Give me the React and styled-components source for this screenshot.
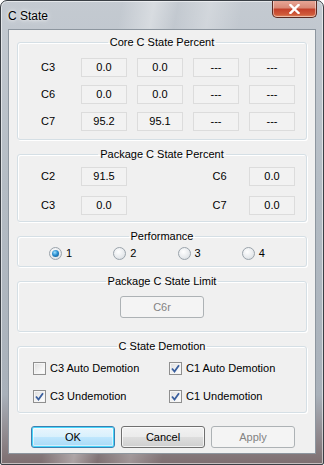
import styled, { createGlobalStyle, css } from 'styled-components';

const GlobalStyle = createGlobalStyle`
  html, body {
    margin: 0;
    padding: 0;
    background: #ffffff;
  }
  body {
    font-family: 'Liberation Sans', Arial, sans-serif;
    font-size: 11px;
    color: #000;
  }
`;

const Window = styled.div`
  width: 324px;
  height: 465px;
  box-sizing: border-box;
  border: 1px solid #3a3f45;
  border-radius: 7px 7px 2px 2px;
  display: flex;
  flex-direction: column;
  background:
    linear-gradient(100deg, rgba(255,255,255,0) 30%, rgba(255,255,255,0.35) 38%, rgba(255,255,255,0) 44%, rgba(255,255,255,0.25) 52%, rgba(255,255,255,0) 60%),
    linear-gradient(180deg, #c4cad1 0%, #b4bcc4 40%, #a9b1ba 85%, #7e6e70 100%);
  box-shadow: inset 0 0 0 1px rgba(255,255,255,0.55);
  overflow: hidden;
`;

const TitleBar = styled.div`
  height: 28px;
  display: flex;
  align-items: flex-start;
  justify-content: space-between;
  padding: 0 6px 0 7px;
`;

const Title = styled.div`
  font-size: 12px;
  line-height: 13px;
  margin-top: 9px;
  color: #000;
  text-shadow: 0 0 6px rgba(255,255,255,0.9), 0 0 3px rgba(255,255,255,0.9);
`;

const CloseButton = styled.div`
  width: 45px;
  height: 18px;
  margin-top: -1px;
  box-sizing: border-box;
  border: 1px solid #5a2a22;
  border-top: 0;
  border-radius: 0 0 5px 5px;
  background: linear-gradient(180deg, #e9a99a 0%, #d98a77 45%, #c4412b 55%, #cf5a3a 85%, #e08b63 100%);
  box-shadow: inset 0 0 0 1px rgba(255,255,255,0.45);
  display: flex;
  align-items: center;
  justify-content: center;
`;

const Client = styled.div`
  flex: 1;
  margin: 0 7px 10px 7px;
  box-sizing: border-box;
  border: 1px solid #8d969f;
  background: #f0f0f0;
  padding: 5px 8px 0 8px;
  display: flex;
  flex-direction: column;
  gap: 7px;
`;

const Group = styled.fieldset`
  margin: 0;
  border: 1px solid #d5dfe5;
  border-radius: 3px;
  box-shadow: inset 1px 1px 0 #ffffff, 1px 1px 0 #ffffff;
  padding: ${(p) => p.$pad || '6px 0 6px 0'};
  min-width: 0;
`;

const Legend = styled.legend`
  margin: 0 auto;
  padding: 0 2px;
  font-size: 11px;
  line-height: 14px;
  color: #000;
`;

const ValueGrid = styled.div`
  display: grid;
  grid-template-columns: 53px repeat(4, 46px);
  column-gap: 10px;
  row-gap: ${(p) => p.$rowGap || 8}px;
  align-items: center;
`;

const Label = styled.div`
  text-align: center;
  padding-left: 7px;
  line-height: 19px;
  grid-column: ${(p) => p.$col || 'auto'};
`;

const ValueBox = styled.div`
  height: 19px;
  box-sizing: border-box;
  border: 1px solid #dcdcdc;
  background: #f2f2f2;
  text-align: center;
  line-height: 17px;
  grid-column: ${(p) => p.$col || 'auto'};
`;

const RadioRow = styled.div`
  display: flex;
  padding-left: 31px;
  height: 14px;
  align-items: center;
`;

const RadioItem = styled.label`
  width: 66px;
  display: flex;
  align-items: center;
  gap: 4px;
`;

const RadioDot = styled.span`
  width: 11px;
  height: 11px;
  border-radius: 50%;
  border: 1px solid #9aa3ab;
  background: radial-gradient(circle at 40% 35%, #ffffff 0%, #e6e9ec 60%, #cfd5da 100%);
  position: relative;
  ${(p) =>
    p.$on &&
    css`
      &::after {
        content: '';
        position: absolute;
        left: 2px;
        top: 2px;
        width: 7px;
        height: 7px;
        border-radius: 50%;
        background: radial-gradient(circle at 40% 35%, #9fe2ff 0%, #2a8ed0 45%, #0d4f80 100%);
      }
    `}
`;

const CenterRow = styled.div`
  display: flex;
  justify-content: center;
`;

const Button = styled.div`
  width: ${(p) => p.$w || 84}px;
  height: 22px;
  box-sizing: border-box;
  border-radius: 3px;
  border: 1px solid #707070;
  display: flex;
  align-items: center;
  justify-content: center;
  font-size: 11px;
  color: #000;
  background: linear-gradient(180deg, #f2f2f2 0%, #ebebeb 48%, #dddddd 52%, #cfcfcf 100%);
  box-shadow: inset 0 0 0 1px rgba(255,255,255,0.7);
  ${(p) =>
    p.$primary &&
    css`
      border-color: #3c7fb1;
      background: linear-gradient(180deg, #eaf6fd 0%, #d9f0fc 48%, #bee6fd 52%, #a7d9f5 100%);
      box-shadow: inset 0 0 0 1px #48d6fb, inset 0 0 0 2px rgba(255,255,255,0.5);
    `}
  ${(p) =>
    p.$disabled &&
    css`
      border-color: #adb2b5;
      background: #f4f4f4;
      color: #838383;
      box-shadow: none;
    `}
`;

const CheckGrid = styled.div`
  display: grid;
  grid-template-columns: 136px 136px;
  padding-left: 15px;
  row-gap: 14px;
`;

const CheckItem = styled.label`
  display: flex;
  align-items: center;
  gap: 4px;
  height: 14px;
`;

const Box = styled.span`
  width: 13px;
  height: 13px;
  box-sizing: border-box;
  border: 1px solid #8f8f8f;
  background: linear-gradient(135deg, #dcdcdc 0%, #f4f4f4 60%, #ffffff 100%);
  box-shadow: inset 0 0 0 1px #f5f5f5;
  display: flex;
  align-items: center;
  justify-content: center;
`;

const ButtonBar = styled.div`
  display: flex;
  gap: 6px;
  padding-left: 14px;
  margin-top: 6px;
`;

const Check = () => (
  <svg width="9" height="9" viewBox="0 0 9 9">
    <path d="M1 4.5 L3.5 7.5 L8 1.2" fill="none" stroke="#3a5f9e" strokeWidth="1.8" />
  </svg>
);

const CheckBox = ({ checked, children }) => (
  <CheckItem>
    <Box>{checked && <Check />}</Box>
    {children}
  </CheckItem>
);

const coreRows = [
  ['C3', '0.0', '0.0', '---', '---'],
  ['C6', '0.0', '0.0', '---', '---'],
  ['C7', '95.2', '95.1', '---', '---'],
];

export default function App() {
  return (
    <>
      <GlobalStyle />
      <Window>
        <TitleBar>
          <Title>C State</Title>
          <CloseButton>
            <svg width="11" height="10" viewBox="0 0 11 10">
              <path d="M1.5 1 L9.5 9 M9.5 1 L1.5 9" stroke="#ffffff" strokeWidth="2.4" strokeLinecap="square" />
            </svg>
          </CloseButton>
        </TitleBar>
        <Client>
          <Group $pad="9px 0 8px 0">
            <Legend>Core C State Percent</Legend>
            <ValueGrid>
              {coreRows.map((row) =>
                row.map((v, i) =>
                  i === 0 ? <Label key={row[0] + i}>{v}</Label> : <ValueBox key={row[0] + i}>{v}</ValueBox>
                )
              )}
            </ValueGrid>
          </Group>

          <Group $pad="6px 0 6px 0">
            <Legend>Package C State Percent</Legend>
            <ValueGrid $rowGap={10}>
              <Label>C2</Label>
              <ValueBox>91.5</ValueBox>
              <Label $col="4">C6</Label>
              <ValueBox>0.0</ValueBox>
              <Label>C3</Label>
              <ValueBox>0.0</ValueBox>
              <Label $col="4">C7</Label>
              <ValueBox>0.0</ValueBox>
            </ValueGrid>
          </Group>

          <Group $pad="3px 0 6px 0">
            <Legend>Performance</Legend>
            <RadioRow>
              {['1', '2', '3', '4'].map((n) => (
                <RadioItem key={n}>
                  <RadioDot $on={n === '1'} />
                  {n}
                </RadioItem>
              ))}
            </RadioRow>
          </Group>

          <Group $pad="8px 0 13px 0">
            <Legend>Package C State Limit</Legend>
            <CenterRow>
              <Button $w={84} $disabled>C6r</Button>
            </CenterRow>
          </Group>

          <Group $pad="8px 0 9px 0">
            <Legend>C State Demotion</Legend>
            <CheckGrid>
              <CheckBox>C3 Auto Demotion</CheckBox>
              <CheckBox checked>C1 Auto Demotion</CheckBox>
              <CheckBox checked>C3 Undemotion</CheckBox>
              <CheckBox checked>C1 Undemotion</CheckBox>
            </CheckGrid>
          </Group>

          <ButtonBar>
            <Button $primary>OK</Button>
            <Button>Cancel</Button>
            <Button $disabled>Apply</Button>
          </ButtonBar>
        </Client>
      </Window>
    </>
  );
}
